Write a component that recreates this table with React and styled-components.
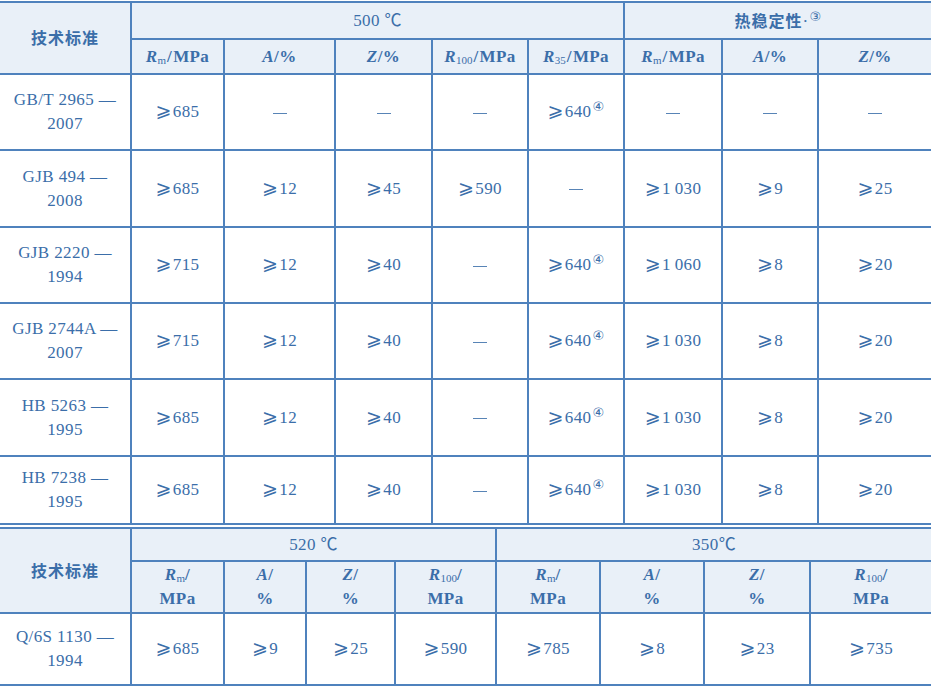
import React from 'react';
import styled, { createGlobalStyle } from 'styled-components';

const TEXT = '#3b6ea9';
const LINE = '#4f82bd';
const HEAD = '#e9f0f8';

const Global = createGlobalStyle`
  html, body { margin: 0; padding: 0; background: #ffffff; }
  body { width: 931px; height: 688px; overflow: hidden; }
`;

const Page = styled.div`
  width: 931px;
  height: 688px;
  padding-top: 1px;
  box-sizing: border-box;
  display: flex;
  flex-direction: column;
  gap: 2px;
  font-family: "Liberation Serif", "Noto Sans CJK SC", serif;
  color: ${TEXT};
`;

const Table = styled.table`
  width: 931px;
  table-layout: fixed;
  border-collapse: collapse;
  border-left: hidden;
  border-right: hidden;
`;

const Col = styled.col`
  width: ${(p) => p.$w}px;
`;

const Row = styled.tr`
  height: ${(p) => p.$h}px;
`;

const Cell = styled.td`
  border: 2px solid ${LINE};
  padding: 0;
  text-align: center;
  vertical-align: middle;
  font-size: 17px;
  line-height: 24px;
  white-space: nowrap;
  letter-spacing: 0.4px;
`;

const Head = styled(Cell).attrs({ as: 'th' })`
  background: ${HEAD};
  font-weight: 400;
`;

const CJK = styled.span`
  font-family: "Noto Sans CJK SC", sans-serif;
  font-weight: 700;
  font-size: 16px;
  letter-spacing: 1px;
`;

const Var = styled.i`
  font-style: italic;
  font-weight: 700;
`;

const Sub = styled.sub`
  font-size: 11px;
  vertical-align: -2px;
  line-height: 0;
  font-style: normal;
  letter-spacing: 0;
`;

const Note = styled.sup`
  font-size: 13px;
  vertical-align: 6px;
  line-height: 0;
  font-family: "DejaVu Sans", "Noto Sans CJK SC", sans-serif;
  margin-left: 1px;
`;

const Ge = styled.span`
  font-family: "DejaVu Sans", sans-serif;
  font-size: 19px;
  line-height: 0;
  margin-right: 1px;
`;

const Dash = styled.span`
  display: inline-block;
  width: 14px;
  height: 1px;
  background: ${TEXT};
  vertical-align: middle;
  opacity: 0.85;
`;

const Unit = styled.span`
  font-weight: 700;
`;

const V = ({ v }) => {
  if (v === '-') return <Dash />;
  const m = v.match(/^(\d[\d\u2009]*)(\*?)$/);
  const num = m ? m[1] : v;
  const note = m && m[2] === '*';
  return (
    <>
      <Ge>⩾</Ge>
      {num}
      {note && <Note>④</Note>}
    </>
  );
};

const cols1 = [131, 93, 111, 97, 96, 96, 98, 96, 113];
const cols2 = [131, 93, 82, 89, 101, 104, 104, 106, 121];

const T = '1\u2009';
const rows1 = [
  { std: ['GB/T 2965 —', '2007'], h: 76, v: ['685', '-', '-', '-', '640*', '-', '-', '-'] },
  { std: ['GJB 494 —', '2008'], h: 77, v: ['685', '12', '45', '590', '-', T + '030', '9', '25'] },
  { std: ['GJB 2220 —', '1994'], h: 76, v: ['715', '12', '40', '-', '640*', T + '060', '8', '20'] },
  { std: ['GJB 2744A —', '2007'], h: 76, v: ['715', '12', '40', '-', '640*', T + '030', '8', '20'] },
  { std: ['HB 5263 —', '1995'], h: 77, v: ['685', '12', '40', '-', '640*', T + '030', '8', '20'] },
  { std: ['HB 7238 —', '1995'], h: 68, v: ['685', '12', '40', '-', '640*', T + '030', '8', '20'] },
];

const row2 = { std: ['Q/6S 1130 —', '1994'], v: ['685', '9', '25', '590', '785', '8', '23', '735'] };

const Rm = () => (
  <>
    <Var>R</Var>
    <Sub>m</Sub>
  </>
);

const Slash = styled.span`
  font-weight: 700;
  margin: 0 1px;
`;

export default function App() {
  return (
    <>
      <Global />
      <Page>
        <Table>
          <colgroup>
            {cols1.map((w, i) => (
              <Col key={i} $w={w} />
            ))}
          </colgroup>
          <thead>
            <Row $h={37}>
              <Head rowSpan={2}>
                <CJK>技术标准</CJK>
              </Head>
              <Head colSpan={5}>500 ℃</Head>
              <Head colSpan={3}>
                <CJK>热稳定性</CJK>·<Note>③</Note>
              </Head>
            </Row>
            <Row $h={35}>
              <Head>
                <Rm />
                <Slash>/</Slash>
                <Unit>MPa</Unit>
              </Head>
              <Head>
                <Var>A</Var>
                <Unit>/%</Unit>
              </Head>
              <Head>
                <Var>Z</Var>
                <Unit>/%</Unit>
              </Head>
              <Head>
                <Var>R</Var>
                <Sub>100</Sub>
                <Slash>/</Slash>
                <Unit>MPa</Unit>
              </Head>
              <Head>
                <Var>R</Var>
                <Sub>35</Sub>
                <Slash>/</Slash>
                <Unit>MPa</Unit>
              </Head>
              <Head>
                <Rm />
                <Slash>/</Slash>
                <Unit>MPa</Unit>
              </Head>
              <Head>
                <Var>A</Var>
                <Unit>/%</Unit>
              </Head>
              <Head>
                <Var>Z</Var>
                <Unit>/%</Unit>
              </Head>
            </Row>
          </thead>
          <tbody>
            {rows1.map((r, i) => (
              <Row key={i} $h={r.h}>
                <Cell>
                  {r.std[0]}
                  <br />
                  {r.std[1]}
                </Cell>
                {r.v.map((v, j) => (
                  <Cell key={j}>
                    <V v={v} />
                  </Cell>
                ))}
              </Row>
            ))}
          </tbody>
        </Table>
        <Table>
          <colgroup>
            {cols2.map((w, i) => (
              <Col key={i} $w={w} />
            ))}
          </colgroup>
          <thead>
            <Row $h={33}>
              <Head rowSpan={2}>
                <CJK>技术标准</CJK>
              </Head>
              <Head colSpan={4}>520 ℃</Head>
              <Head colSpan={4}>350℃</Head>
            </Row>
            <Row $h={52}>
              {[0, 1].map((k) => (
                <React.Fragment key={k}>
                  <Head>
                    <Rm />
                    <Unit>/</Unit>
                    <br />
                    <Unit>MPa</Unit>
                  </Head>
                  <Head>
                    <Var>A</Var>
                    <Unit>/</Unit>
                    <br />
                    <Unit>%</Unit>
                  </Head>
                  <Head>
                    <Var>Z</Var>
                    <Unit>/</Unit>
                    <br />
                    <Unit>%</Unit>
                  </Head>
                  <Head>
                    <Var>R</Var>
                    <Sub>100</Sub>
                    <Unit>/</Unit>
                    <br />
                    <Unit>MPa</Unit>
                  </Head>
                </React.Fragment>
              ))}
            </Row>
          </thead>
          <tbody>
            <Row $h={72}>
              <Cell>
                {row2.std[0]}
                <br />
                {row2.std[1]}
              </Cell>
              {row2.v.map((v, j) => (
                <Cell key={j}>
                  <V v={v} />
                </Cell>
              ))}
            </Row>
          </tbody>
        </Table>
      </Page>
    </>
  );
}
